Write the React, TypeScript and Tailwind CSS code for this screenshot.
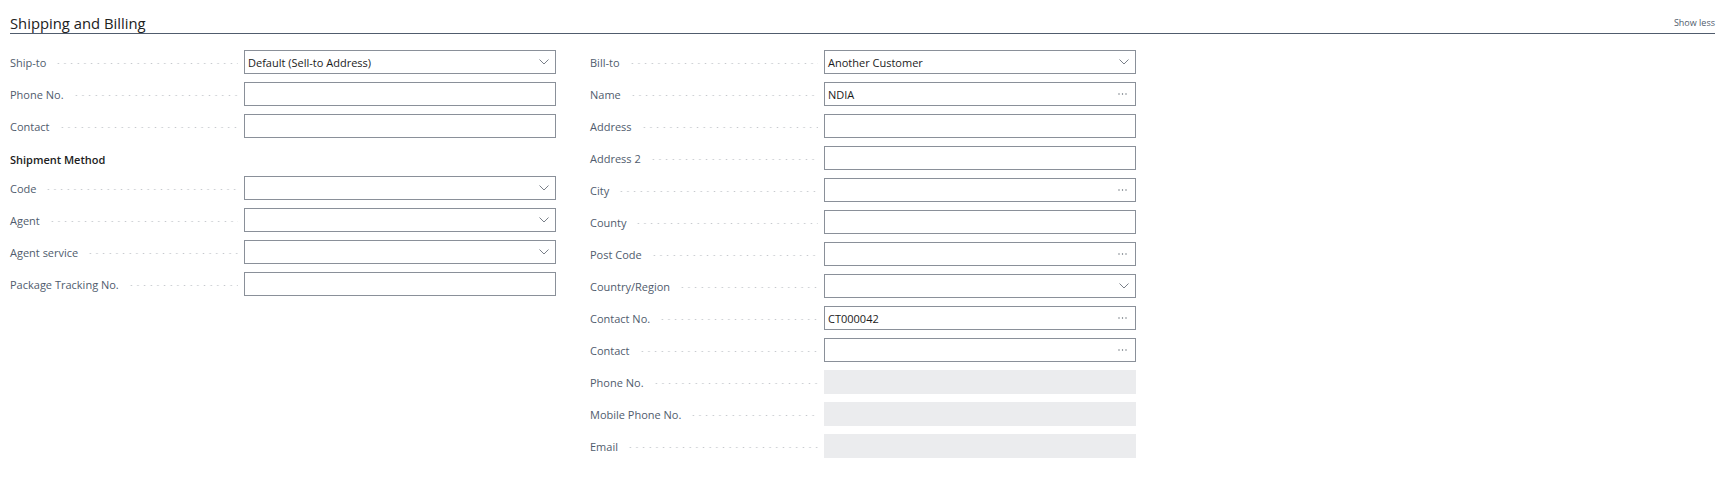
import React from 'react';

type Field = {
  label: string;
  value?: string;
  kind?: 'text' | 'select' | 'lookup' | 'readonly';
};

const leftTop: Field[] = [
  { label: 'Ship-to', value: 'Default (Sell-to Address)', kind: 'select' },
  { label: 'Phone No.' },
  { label: 'Contact' },
];

const shipment: Field[] = [
  { label: 'Code', kind: 'select' },
  { label: 'Agent', kind: 'select' },
  { label: 'Agent service', kind: 'select' },
  { label: 'Package Tracking No.' },
];

const right: Field[] = [
  { label: 'Bill-to', value: 'Another Customer', kind: 'select' },
  { label: 'Name', value: 'NDIA', kind: 'lookup' },
  { label: 'Address' },
  { label: 'Address 2' },
  { label: 'City', kind: 'lookup' },
  { label: 'County' },
  { label: 'Post Code', kind: 'lookup' },
  { label: 'Country/Region', kind: 'select' },
  { label: 'Contact No.', value: 'CT000042', kind: 'lookup' },
  { label: 'Contact', kind: 'lookup' },
  { label: 'Phone No.', kind: 'readonly' },
  { label: 'Mobile Phone No.', kind: 'readonly' },
  { label: 'Email', kind: 'readonly' },
];

const Chevron = () => (
  <svg width="10" height="6" viewBox="0 0 10 6" className="shrink-0">
    <polyline points="0.5,0.5 5,5 9.5,0.5" fill="none" stroke="#7a8089" strokeWidth="1" />
  </svg>
);

const Dots = () => (
  <svg width="9" height="2" viewBox="0 0 9 2" className="shrink-0 mr-[2px]">
    <circle cx="1" cy="1" r="0.7" fill="#5f6670" />
    <circle cx="4.5" cy="1" r="0.7" fill="#5f6670" />
    <circle cx="8" cy="1" r="0.7" fill="#5f6670" />
  </svg>
);

const Row = ({ f }: { f: Field }) => {
  const kind = f.kind ?? 'text';
  return (
    <div className="flex h-8 items-center">
      <div className="flex w-[234px] items-center pr-[6px]">
        <span className="whitespace-nowrap text-[11px] leading-[15px] text-[#505c6d]">{f.label}</span>
        {/* leader dots */}
        <div className="ml-[9px] mt-[3px] h-[3px] flex-1 bg-[radial-gradient(circle,_#c4c7cc_0.8px,_transparent_1px)] bg-[length:6.67px_3px] bg-repeat-x" />
      </div>
      {kind === 'readonly' ? (
        <div className="h-[24px] w-[312px] bg-[#ebecee]" />
      ) : (
        <div className="flex h-[24px] w-[312px] items-center justify-between border border-[#8a9099] bg-white pl-[3px] pr-[6px]">
          <span className="whitespace-nowrap text-[11px] leading-[15px] text-[#1b1b1b]">{f.value ?? ''}</span>
          {kind === 'select' && <Chevron />}
          {kind === 'lookup' && <Dots />}
        </div>
      )}
    </div>
  );
};

export default function App() {
  return (
    <div className="h-[495px] w-[1725px] bg-white px-[10px] font-['Open_Sans',sans-serif]">
      <div className="flex w-[1705px] items-center justify-between border-b border-[#505c6d] pt-[13px]">
        <span className="text-[14.8px] leading-[20px] text-[#212121]">Shipping and Billing</span>
        <span className="text-[9px] leading-[12px] text-[#505c6d]">Show less</span>
      </div>

      <div className="mt-[12px] flex gap-[34px]">
        <div className="flex w-[546px] flex-col">
          {leftTop.map((f) => (
            <Row key={f.label} f={f} />
          ))}
          <div className="h-[30px] pt-[10px] text-[11px] font-semibold leading-[15px] text-[#212121]">Shipment Method</div>
          {shipment.map((f) => (
            <Row key={f.label} f={f} />
          ))}
        </div>
        <div className="flex w-[546px] flex-col">
          {right.map((f, i) => (
            <Row key={i} f={f} />
          ))}
        </div>
      </div>
    </div>
  );
}
